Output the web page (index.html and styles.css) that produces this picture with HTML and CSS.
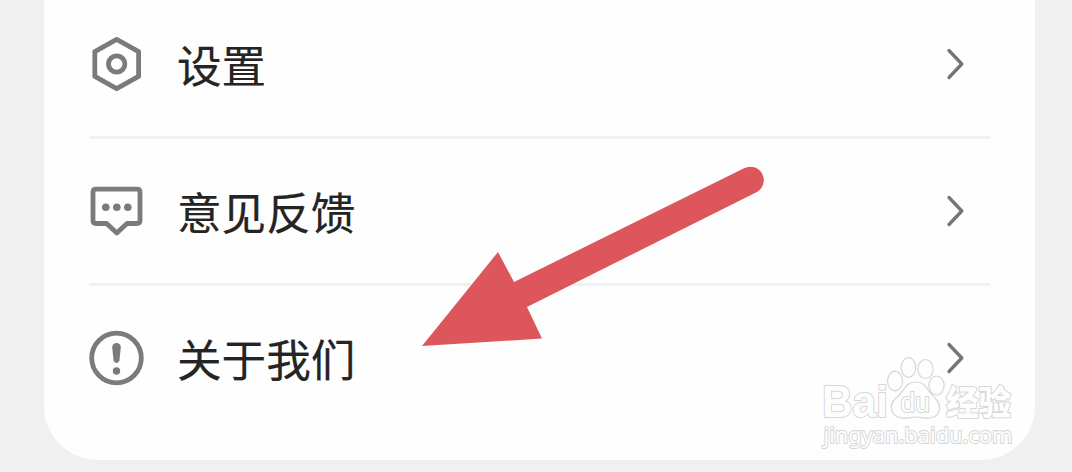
FILE: index.html
```html
<!DOCTYPE html>
<html lang="zh-CN">
<head>
<meta charset="utf-8">
<title>设置</title>
<link rel="stylesheet" href="styles.css">
</head>
<body>
<main class="card">
  <div class="row row-first">
    <svg class="icon" viewBox="0 0 56 56"><path d="M27.700 3.400 49.600 15.600V40.400L27.700 52.600 5.800 40.400V15.600Z"/><circle cx="27.700" cy="28" r="8.200"/></svg>
    <span class="label">设置</span>
    <svg class="chevron" viewBox="0 0 20 32"><path d="M3 2.500 15.800 16 3 29.500"/></svg>
  </div>
  <div class="row">
    <svg class="icon" viewBox="0 0 56 56"><path d="M7 6.200H48Q51 6.200 51 9.200V37.500Q51 40.500 48 40.500H38L27.800 50 17.600 40.500H7Q4 40.500 4 37.500V9.200Q4 6.200 7 6.200Z"/><g class="solid"><circle cx="16.800" cy="24.300" r="3.800"/><circle cx="27.800" cy="24.300" r="3.800"/><circle cx="38.800" cy="24.300" r="3.800"/></g></svg>
    <span class="label">意见反馈</span>
    <svg class="chevron" viewBox="0 0 20 32"><path d="M3 2.500 15.800 16 3 29.500"/></svg>
  </div>
  <div class="row row-last">
    <svg class="icon" viewBox="0 0 56 56"><circle cx="27.500" cy="28" r="24.800"/><g class="solid"><path d="M23.200 17.200A4.300 4.300 0 0 1 31.800 17.200L30.400 31Q27.500 35 24.600 31Z"/><circle cx="27.500" cy="41" r="3.700"/></g></svg>
    <span class="label">关于我们</span>
    <svg class="chevron" viewBox="0 0 20 32"><path d="M3 2.500 15.800 16 3 29.500"/></svg>
  </div>
</main>
<svg class="arrow" viewBox="0 0 360 190"><path d="M2 186 78 92 94 122 324 8.200A13.500 13.500 0 0 1 336.500 32.200L107 147 122 178.500Z"/></svg>
<svg class="watermark" viewBox="0 0 210 100">
  <g class="paw">
    <ellipse cx="75" cy="31" rx="7.500" ry="9.800"/>
    <ellipse cx="88.500" cy="17.500" rx="7.300" ry="9.800"/>
    <ellipse cx="105.500" cy="19" rx="7.700" ry="9.500"/>
    <ellipse cx="116.500" cy="35.500" rx="7.700" ry="9.500"/>
    <path d="M96 32C85 32 84 42 76 48 67 56 72 67 82 68 88 68.500 91 67 96 67 101 67 104 68.500 110 68 120 67 123 56 115 48 107 42 107 32 96 32Z"/>
  </g>
  <text class="brand" x="2" y="67" textLength="66" lengthAdjust="spacingAndGlyphs">Bai</text>
  <text class="du" x="80.500" y="62" textLength="29.500" lengthAdjust="spacingAndGlyphs">du</text>
  <text class="brand-cn" x="126" y="64.500" textLength="65" lengthAdjust="spacingAndGlyphs">经验</text>
  <text class="url" x="3.500" y="93" textLength="189" lengthAdjust="spacingAndGlyphs">jingyan.baidu.com</text>
</svg>
</body>
</html>
```
FILE: styles.css
```css
body {
  margin: 0;
  height: 472px;
  position: relative;
  overflow: hidden;
  background: #f0f0f0;
}
.card {
  box-sizing: border-box;
  width: 991px;
  height: 460px;
  margin-left: 44px;
  padding: 0 45px;
  background: #fefefe;
  border-radius: 0 0 54px 54px;
}
.row {
  box-sizing: border-box;
  display: flex;
  align-items: center;
  width: 901px;
  height: 147px;
  border-bottom: 3px solid #f1f1f1;
}
.row-first {
  height: 139px;
  padding-bottom: 8px;
}
.row-last {
  height: 144px;
  border-bottom: 0;
}
.icon {
  width: 56px;
  height: 56px;
  fill: none;
  stroke: #7b7b7b;
  stroke-width: 4.8;
  stroke-linejoin: round;
}
.icon .solid {
  fill: #7b7b7b;
  stroke: none;
}
.label {
  flex: 1;
  margin-left: 32px;
  padding-bottom: 1px;
  font: 400 44.6px/60px "Noto Sans CJK SC", sans-serif;
  color: #242424;
  -webkit-text-stroke: 0.2px #242424;
}
.chevron {
  width: 20px;
  height: 32px;
  margin-right: 24px;
  fill: none;
  stroke: #757575;
  stroke-width: 3.3;
  stroke-linecap: round;
  stroke-linejoin: round;
}
.arrow {
  position: absolute;
  left: 420px;
  top: 160px;
  width: 360px;
  height: 190px;
  fill: #dc565b;
}
.watermark {
  position: absolute;
  left: 820px;
  top: 350px;
  width: 210px;
  height: 100px;
  fill: #fefefe;
  stroke: #d6d6d6;
  stroke-width: 1.2;
}
.watermark text {
  paint-order: stroke;
  stroke-width: 2;
  stroke-linejoin: round;
}
.brand {
  font: 700 44px "Liberation Sans", sans-serif;
}
.du {
  font: 400 28px "Liberation Sans", sans-serif;
}
.brand-cn {
  font: 900 34px "Noto Sans CJK SC", sans-serif;
}
.url {
  font: 400 22px "Noto Sans", sans-serif;
}
```
